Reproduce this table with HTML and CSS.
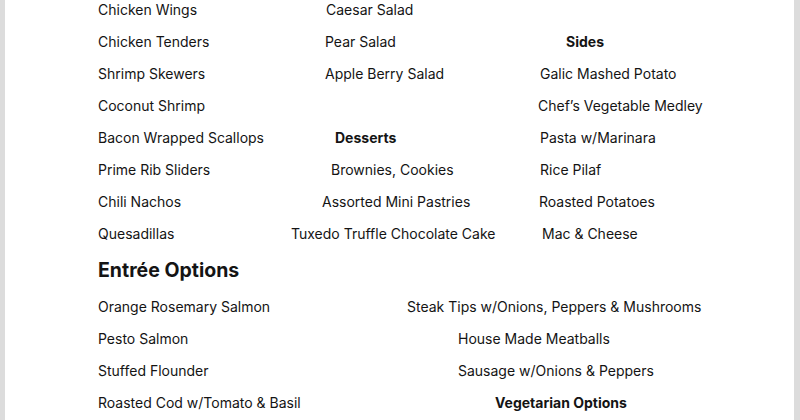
FILE: index.html
```html
<!DOCTYPE html>
<html lang="en">
<head>
<meta charset="utf-8">
<title>Menu</title>
<link rel="stylesheet" href="styles.css">
</head>
<body>
<div class="page">
  <div class="table first">
    <div class="row"><span>Chicken Wings</span><span class="o36">Caesar Salad</span><span></span></div>
    <div class="row"><span>Chicken Tenders</span><span class="o35">Pear Salad</span><span class="o28 b">Sides</span></div>
    <div class="row"><span>Shrimp Skewers</span><span class="o35">Apple Berry Salad</span><span class="o2">Galic Mashed Potato</span></div>
    <div class="row"><span>Coconut Shrimp</span><span></span><span>Chef’s Vegetable Medley</span></div>
    <div class="row"><span>Bacon Wrapped Scallops</span><span class="o45 b">Desserts</span><span class="o2">Pasta w/Marinara</span></div>
    <div class="row"><span>Prime Rib Sliders</span><span class="o41">Brownies, Cookies</span><span class="o2">Rice Pilaf</span></div>
    <div class="row"><span>Chili Nachos</span><span class="o32">Assorted Mini Pastries</span><span class="o1">Roasted Potatoes</span></div>
    <div class="row"><span>Quesadillas</span><span class="o1">Tuxedo Truffle Chocolate Cake</span><span class="o4">Mac &amp; Cheese</span></div>
  </div>
  <h2 class="heading">Entrée Options</h2>
  <div class="table two">
    <div class="row"><span>Orange Rosemary Salmon</span><span>Steak Tips w/Onions, Peppers &amp; Mushrooms</span></div>
    <div class="row"><span>Pesto Salmon</span><span class="o51">House Made Meatballs</span></div>
    <div class="row"><span>Stuffed Flounder</span><span class="o51">Sausage w/Onions &amp; Peppers</span></div>
    <div class="row"><span>Roasted Cod w/Tomato &amp; Basil</span><span class="o88 b">Vegetarian Options</span></div>
  </div>
</div>
</body>
</html>
```
FILE: styles.css
```css
html, body {
  margin: 0;
  padding: 0;
  background: #dcdcdc;
  height: 100%;
  overflow: hidden;
}
.page {
  display: flow-root;
  margin-left: 5px;
  width: 789px;
  height: 100%;
  background: #ffffff;
  padding-left: 93px;
  box-sizing: border-box;
  font-family: Inter, "Noto Sans", sans-serif;
  font-size: 14px;
  color: #141414;
}
.table {
  display: flex;
  flex-direction: column;
}
.first {
  margin-top: -6px;
}
.row {
  display: grid;
  grid-template-columns: 192px 248px 1fr;
  height: 32px;
  line-height: 32px;
  white-space: nowrap;
}
.two .row {
  grid-template-columns: 309px 1fr;
}
.heading {
  margin: 0;
  font-size: 19.5px;
  font-weight: 700;
  line-height: 41px;
  height: 41px;
}
.b { font-weight: 700; }
.o1 { margin-left: 1px; }
.o2 { margin-left: 2px; }
.o4 { margin-left: 4px; }
.o28 { margin-left: 28px; }
.o32 { margin-left: 32px; }
.o35 { margin-left: 35px; }
.o36 { margin-left: 36px; }
.o41 { margin-left: 41px; }
.o45 { margin-left: 45px; }
.o51 { margin-left: 51px; }
.o88 { margin-left: 88px; }
```
